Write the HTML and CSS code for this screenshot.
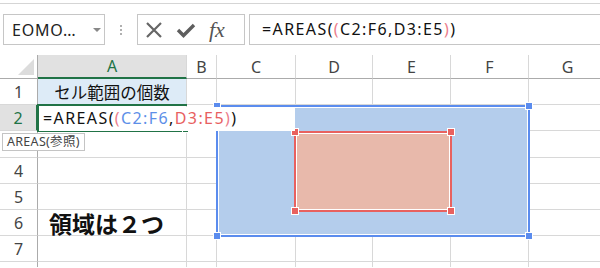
FILE: index.html
```html
<!DOCTYPE html>
<html>
<head>
<meta charset="utf-8">
<link rel="stylesheet" href="styles.css">
</head>
<body>
<div class="toolbar">
  <div class="namebox"><span class="nametext">EOMO…</span><span class="caret"></span></div>
  <div class="dots"><i></i><i></i><i></i></div>
  <div class="iconbox">
    <svg class="ic" width="20" height="20" viewBox="0 0 20 20"><path d="M3 3 L17 17 M17 3 L3 17" stroke="#666" stroke-width="2.2" fill="none"/></svg>
    <svg class="ic" width="20" height="20" viewBox="0 0 20 20"><path d="M2 10 L7.5 15.5 L18 5" stroke="#5e5e5e" stroke-width="3.4" fill="none"/></svg>
    <span class="fx">fx</span>
  </div>
  <div class="fbar"><span>=AREAS(</span><span class="pk">(</span><span>C2:F6,D3:E5</span><span class="pk">)</span><span>)</span></div>
</div>
<div class="sheet">
  <div class="c hd corner"><span class="tri"></span></div>
  <div class="c hd sel">A</div>
  <div class="c hd">B</div>
  <div class="c hd">C</div>
  <div class="c hd">D</div>
  <div class="c hd">E</div>
  <div class="c hd">F</div>
  <div class="c hd">G</div>

  <div class="c rh">1</div><div class="c a1">セル範囲の個数</div><div class="c"></div><div class="c"></div><div class="c"></div><div class="c"></div><div class="c"></div><div class="c"></div>
  <div class="c rh rsel">2</div><div class="c"></div><div class="c"></div><div class="c"></div><div class="c"></div><div class="c"></div><div class="c"></div><div class="c"></div>
  <div class="c rh"></div><div class="c"></div><div class="c"></div><div class="c"></div><div class="c"></div><div class="c"></div><div class="c"></div><div class="c"></div>
  <div class="c rh">4</div><div class="c"></div><div class="c"></div><div class="c"></div><div class="c"></div><div class="c"></div><div class="c"></div><div class="c"></div>
  <div class="c rh">5</div><div class="c"></div><div class="c"></div><div class="c"></div><div class="c"></div><div class="c"></div><div class="c"></div><div class="c"></div>
  <div class="c rh">6</div><div class="c big">領域は２つ</div><div class="c"></div><div class="c"></div><div class="c"></div><div class="c"></div><div class="c"></div><div class="c"></div>
  <div class="c rh">7</div><div class="c"></div><div class="c"></div><div class="c"></div><div class="c"></div><div class="c"></div><div class="c"></div><div class="c"></div>
  <div class="c rh last"></div><div class="c last"></div><div class="c last"></div><div class="c last"></div><div class="c last"></div><div class="c last"></div><div class="c last"></div><div class="c last"></div>

  <div class="range blue">
    <span class="h tl"></span><span class="h tr"></span><span class="h bl"></span><span class="h br"></span>
  </div>
  <div class="range red">
    <span class="h tl"></span><span class="h tr"></span><span class="h bl"></span><span class="h br"></span>
  </div>
  <div class="frame"><span class="fill"></span></div>
  <div class="editor"><span>=AREAS(</span><span class="pk2">(</span><span class="bl2">C2:F6</span><span>,</span><span class="rd2">D3:E5</span><span class="pk2">)</span><span>)</span></div>
  <div class="tip">AREAS(参照)</div>
</div>
</body>
</html>
```
FILE: styles.css
```css
html, body { margin: 0; padding: 0; background: #fff; }
body {
  width: 600px; height: 268px; overflow: hidden;
  font-family: "Noto Sans", "Noto Sans CJK JP", sans-serif;
  color: #222;
}
.toolbar {
  margin-top: 3px;
  border-top: 1px solid #d5d5d5;
  height: 52px;
  box-sizing: border-box;
  padding-top: 10px;
  display: flex;
  align-items: flex-start;
}
.namebox {
  margin-left: 3px;
  width: 102px; height: 31px;
  box-sizing: border-box;
  border: 1px solid #c6c6c6;
  display: flex; align-items: center;
  position: relative;
}
.nametext { margin-left: 8px; font-size: 16px; color: #222; letter-spacing: 0.8px; }
.caret {
  position: absolute; left: 89px; top: 13px;
  width: 0; height: 0;
  border-left: 4px solid transparent; border-right: 4px solid transparent;
  border-top: 4px solid #888;
}
.dots {
  width: 32px; height: 31px;
  display: flex; flex-direction: column; align-items: center; justify-content: center; gap: 2px;
}
.dots i { display: block; width: 2px; height: 2px; background: #b0b0b0; }
.iconbox {
  width: 108px; height: 31px;
  box-sizing: border-box;
  border: 1px solid #c6c6c6;
  display: flex; align-items: center;
  padding-left: 6px; gap: 12px;
}
.ic { display: block; }
.fx {
  font-family: "Liberation Serif", "DejaVu Serif", serif;
  font-style: italic; font-size: 22px; color: #555;
  margin-left: 1px; line-height: 28px;
}
.fbar {
  margin-left: 4px;
  flex: 1;
  height: 31px;
  box-sizing: border-box;
  border: 1px solid #c6c6c6;
  border-right: none;
  padding-left: 12px;
  font-size: 16px; line-height: 29px; letter-spacing: 1.4px;
  color: #111;
}
.pk { color: #ec7d8c; }

.sheet {
  position: relative;
  display: grid;
  grid-template-columns: 38px 149px 30px 79px 77px 78px 78px 78px;
  grid-template-rows: 24px 26px 26px 27px 26px 26px 26px 26px 5px;
  width: 607px;
  overflow: hidden;
}
.c {
  box-sizing: border-box;
  border-right: 1px solid #d8d8d8;
  border-bottom: 1px solid #d8d8d8;
  font-size: 16px;
  display: flex; align-items: center;
  overflow: visible; white-space: nowrap;
}
.c.last { border-bottom: none; }
.hd {
  justify-content: center;
  color: #444;
  border-bottom: 1px solid #ababab;
  font-size: 16px;
}
.hd.sel { background: #e1e1e1; color: #217346; border-bottom: 2px solid #217346; }
.corner { position: relative; border-right: 1px solid #ababab; }
.tri {
  position: absolute; right: 3px; bottom: 3px;
  width: 0; height: 0;
  border-left: 16px solid transparent;
  border-bottom: 16px solid #dcdcdc;
}
.rh {
  justify-content: center; color: #444;
  border-right: 1px solid #ababab;
}
.rh.rsel { background: #e1e1e1; color: #217346; border-right: 2px solid #217346; }
.a1 {
  background: #ddebf7; justify-content: center;
  font-family: "Noto Sans CJK JP", sans-serif; font-size: 16.5px; color: #111;
}
.big {
  font-family: "Noto Sans CJK JP", sans-serif; font-weight: bold;
  font-size: 23px; color: #111; padding-left: 11px;
}

.range { position: absolute; box-sizing: border-box; }
.blue {
  left: 216px; top: 50px; width: 314px; height: 132px;
  border: 2px solid #5b8cee; background: #b4cdec;
  box-shadow: inset 0 0 0 1px #fff;
}
.red {
  left: 294px; top: 76px; width: 158px; height: 81px;
  border: 2px solid #e8615f; background: #e8b9ab;
  box-shadow: inset 0 0 0 1px #fff;
}
.h {
  position: absolute; width: 8px; height: 8px; box-sizing: border-box;
  border: 1px solid #fff;
}
.blue .h { background: #5b8cee; }
.red .h { background: #e8615f; }
.h.tl { left: -5px; top: -5px; }
.h.tr { right: -5px; top: -5px; }
.h.bl { left: -5px; bottom: -5px; }
.h.br { right: -5px; bottom: -5px; }

.frame {
  position: absolute; left: 37px; top: 49px; width: 150px; height: 28px;
  box-sizing: border-box;
  border: 2px solid #217346; border-right: none;
}
.fill {
  position: absolute; right: -2px; bottom: -3px; width: 5px; height: 5px;
  background: #217346; border: 1px solid #fff;
}
.editor {
  position: absolute; left: 39px; top: 52px; width: 256px; height: 24px;
  background: #fff;
  padding-left: 4px; box-sizing: border-box;
  font-size: 16px; line-height: 23px; letter-spacing: 1.4px; color: #111; white-space: nowrap;
}
.pk2 { color: #ec7d8c; }
.bl2 { color: #5d8fe8; }
.rd2 { color: #e8605f; }
.tip {
  position: absolute; left: 2px; top: 78px; width: 83px; height: 18px;
  box-sizing: border-box;
  border: 1px solid #c4c4c4; background: #fff;
  font-size: 12.5px; line-height: 16px; color: #444; padding-left: 4px; letter-spacing: 0.3px;
  font-family: "Noto Sans", "Noto Sans CJK JP", sans-serif;
}
```
